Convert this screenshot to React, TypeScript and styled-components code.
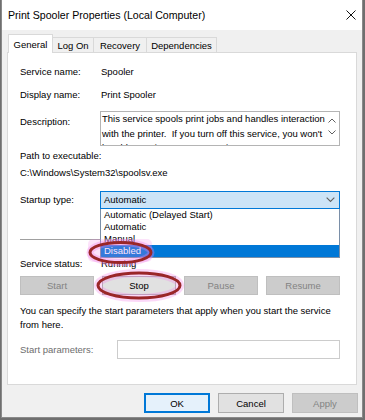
import styled, { createGlobalStyle } from 'styled-components'

const GlobalStyle = createGlobalStyle`
  html, body {
    margin: 0;
    padding: 0;
    background: #6f6f6f;
  }
  body {
    font-family: "Liberation Sans", Arial, sans-serif;
  }
  * {
    box-sizing: border-box;
  }
`

const Page = styled.div`
  position: relative;
  width: 365px;
  height: 420px;
  overflow: hidden;
`

const Window = styled.div`
  margin-left: 1px;
  width: 362px;
  height: 418px;
  border: 1px solid #8a8a8a;
  border-top: none;
  background: #f0f0f0;
  display: flex;
  flex-direction: column;
  font-size: 9.5px;
  color: #000;
`

const TitleBar = styled.div`
  height: 30px;
  background: #ffffff;
  display: flex;
  align-items: center;
  justify-content: space-between;
  padding: 0 6px 0 6px;
`

const Title = styled.span`
  font-size: 10.6px;
  color: #000;
`

const Body = styled.div`
  flex: 1;
  display: flex;
  flex-direction: column;
  padding: 4px 5px 0 5px;
`

const TabStrip = styled.div`
  display: flex;
  align-items: flex-end;
  height: 18px;
  padding-left: 1px;
  position: relative;
  z-index: 1;
`

const Tab = styled.div<{ $active?: boolean; $w: number }>`
  width: ${p => p.$w}px;
  height: ${p => (p.$active ? 19 : 15)}px;
  margin-bottom: ${p => (p.$active ? -1 : 0)}px;
  margin-right: -1px;
  background: ${p => (p.$active ? '#ffffff' : '#f0f0f0')};
  border: 1px solid #d9d9d9;
  border-bottom: none;
  display: flex;
  align-items: center;
  justify-content: center;
  position: relative;
  z-index: ${p => (p.$active ? 2 : 1)};
`

const Panel = styled.div`
  height: 333px;
  background: #ffffff;
  border: 1px solid #d9d9d9;
  padding: 12px 16px 0 12px;
  display: flex;
  flex-direction: column;
`

const Row = styled.div<{ $mt?: number; $top?: boolean }>`
  display: flex;
  align-items: ${p => (p.$top ? 'flex-start' : 'center')};
  margin-top: ${p => p.$mt ?? 0}px;
  line-height: 14px;
`

const Label = styled.div<{ $w?: number; $muted?: boolean; $pt?: number }>`
  width: ${p => p.$w ?? 80}px;
  flex-shrink: 0;
  padding-top: ${p => p.$pt ?? 0}px;
  color: ${p => (p.$muted ? '#6d6d6d' : '#000')};
`

const Value = styled.div`
  padding-left: 1px;
`

const TextLine = styled.div<{ $mt?: number }>`
  margin-top: ${p => p.$mt ?? 0}px;
  line-height: 14px;
`

const TextBox = styled.div`
  width: 240px;
  height: 35px;
  border: 1px solid #b4b4b4;
  display: flex;
  overflow: hidden;
`

const DescText = styled.div`
  flex: 1;
  padding: 0 0 0 1px;
  line-height: 14.5px;
  white-space: pre;
`

const ScrollCol = styled.div`
  width: 14px;
  display: flex;
  flex-direction: column;
  align-items: center;
  gap: 7px;
  padding-top: 6px;
`

const SelectWrap = styled.div`
  position: relative;
  width: 240px;
`

const Select = styled.div`
  height: 18px;
  border: 1px solid #0078d7;
  background: #cce4f7;
  display: flex;
  align-items: center;
  justify-content: space-between;
  padding: 0 4px 0 3px;
`

const DropList = styled.div`
  position: absolute;
  top: 100%;
  left: 0;
  right: 0;
  background: #ffffff;
  border: 1px solid #7a8fa8;
  border-top: none;
  z-index: 5;
`

const DropItem = styled.div<{ $selected?: boolean }>`
  height: 12px;
  line-height: 12px;
  padding-left: 3px;
  background: ${p => (p.$selected ? '#0078d7' : 'transparent')};
  color: ${p => (p.$selected ? '#ffffff' : '#000')};
`

const Separator = styled.div<{ $mt: number }>`
  margin-top: ${p => p.$mt}px;
  height: 1px;
  width: 320px;
  background: #a0a0a0;
`

const ButtonGrid = styled.div`
  margin-top: 5px;
  display: grid;
  grid-template-columns: repeat(4, 74px);
  gap: 8px;
`

const Button = styled.div<{ $disabled?: boolean; $default?: boolean; $w?: number; $h?: number }>`
  width: ${p => (p.$w ? `${p.$w}px` : 'auto')};
  height: ${p => p.$h ?? 19}px;
  display: flex;
  align-items: center;
  justify-content: center;
  background: ${p => (p.$disabled ? '#cccccc' : p.$default ? '#e5f1fb' : '#e1e1e1')};
  border: ${p => (p.$default ? '2px solid #0078d7' : p.$disabled ? '1px solid #bfbfbf' : '1px solid #adadad')};
  color: ${p => (p.$disabled ? '#838383' : '#000')};
`

const ParamInput = styled.div`
  width: 223px;
  height: 19px;
  border: 1px solid #cccccc;
  background: #ffffff;
`

const Footer = styled.div`
  display: flex;
  justify-content: flex-end;
  gap: 8px;
  padding-top: 8px;
  margin-right: -1px;
`

const Annotations = styled.svg`
  position: absolute;
  top: 0;
  left: 0;
  pointer-events: none;
  z-index: 10;
`

const Chevron = ({ up, size = 8 }: { up?: boolean; size?: number }) => (
  <svg width={size} height={size / 2 + 1} viewBox="0 0 8 5">
    <path
      d={up ? 'M0.5 4.5 L4 1 L7.5 4.5' : 'M0.5 0.5 L4 4 L7.5 0.5'}
      fill="none"
      stroke="#606060"
      strokeWidth="1"
    />
  </svg>
)

export default function App() {
  return (
    <>
      <GlobalStyle />
      <Page>
        <Window>
          <TitleBar>
            <Title>Print Spooler Properties (Local Computer)</Title>
            <svg width="10" height="10" viewBox="0 0 10 10">
              <path d="M0.5 0.5 L9.5 9.5 M9.5 0.5 L0.5 9.5" stroke="#111" strokeWidth="1" />
            </svg>
          </TitleBar>
          <Body>
            <TabStrip>
              <Tab $active $w={45}>General</Tab>
              <Tab $w={42}>Log On</Tab>
              <Tab $w={54}>Recovery</Tab>
              <Tab $w={71}>Dependencies</Tab>
            </TabStrip>
            <Panel>
              <Row>
                <Label>Service name:</Label>
                <Value>Spooler</Value>
              </Row>
              <Row $mt={9}>
                <Label>Display name:</Label>
                <Value>Print Spooler</Value>
              </Row>
              <Row $mt={9} $top>
                <Label $pt={4}>Description:</Label>
                <TextBox>
                  <DescText>
                    {'This service spools print jobs and handles interaction\nwith the printer.  If you turn off this service, you won\'t\nbe able to print or see your printers.'}
                  </DescText>
                  <ScrollCol>
                    <Chevron up />
                    <Chevron />
                  </ScrollCol>
                </TextBox>
              </Row>
              <TextLine $mt={3}>Path to executable:</TextLine>
              <TextLine $mt={3}>C:\Windows\System32\spoolsv.exe</TextLine>
              <Row $mt={11}>
                <Label>Startup type:</Label>
                <SelectWrap>
                  <Select>
                    <span>Automatic</span>
                    <Chevron size={9} />
                  </Select>
                  <DropList>
                    <DropItem>Automatic (Delayed Start)</DropItem>
                    <DropItem>Automatic</DropItem>
                    <DropItem>Manual</DropItem>
                    <DropItem $selected>Disabled</DropItem>
                  </DropList>
                </SelectWrap>
              </Row>
              <Separator $mt={30} />
              <Row $mt={17}>
                <Label>Service status:</Label>
                <Value>Running</Value>
              </Row>
              <ButtonGrid>
                <Button $disabled>Start</Button>
                <Button>Stop</Button>
                <Button $disabled>Pause</Button>
                <Button $disabled>Resume</Button>
              </ButtonGrid>
              <TextLine $mt={9}>
                You can specify the start parameters that apply when you start the service
                <br />
                from here.
              </TextLine>
              <Row $mt={8}>
                <Label $w={97} $muted>Start parameters:</Label>
                <ParamInput />
              </Row>
            </Panel>
            <Footer>
              <Button $default $w={66} $h={20}>OK</Button>
              <Button $w={66} $h={20}>Cancel</Button>
              <Button $disabled $w={66} $h={20}>Apply</Button>
            </Footer>
          </Body>
        </Window>
        <Annotations width="365" height="420" viewBox="0 0 365 420">
          <rect x="88" y="239" width="64" height="23" rx="5" fill="#f27fe9" opacity="0.22" />
          <ellipse cx="120.5" cy="252.5" rx="30.5" ry="10" fill="none" stroke="#f27fe9" strokeWidth="7" opacity="0.35" />
          <ellipse cx="120.5" cy="252.5" rx="30.5" ry="10" fill="none" stroke="#9a2628" strokeWidth="3" />
          <ellipse cx="139" cy="285.5" rx="41" ry="12.5" fill="none" stroke="#f27fe9" strokeWidth="8" opacity="0.3" />
          <ellipse cx="139" cy="285.5" rx="41" ry="12.5" fill="none" stroke="#9a2628" strokeWidth="3" />
        </Annotations>
      </Page>
    </>
  )
}
